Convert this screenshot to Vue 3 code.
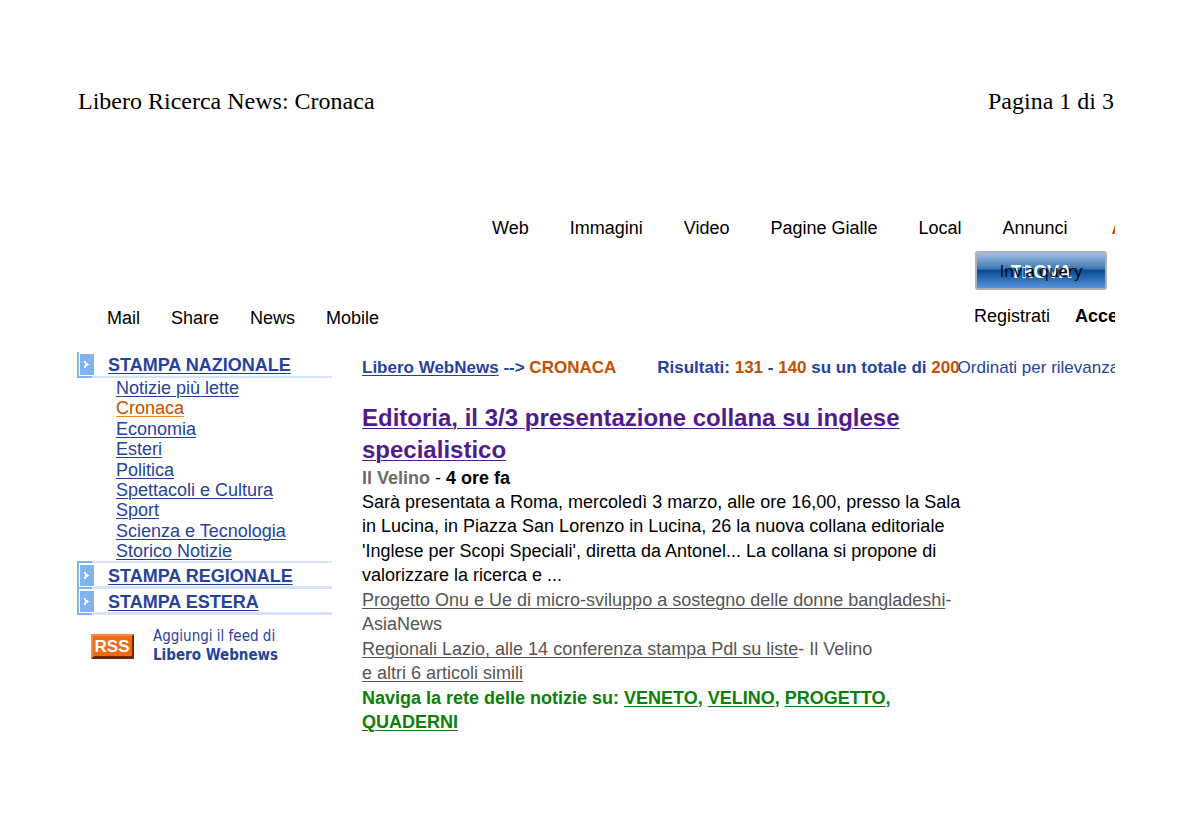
<script setup>
const searchTabs = ['Web', 'Immagini', 'Video', 'Pagine Gialle', 'Local', 'Annunci']
const services = ['Mail', 'Share', 'News', 'Mobile']
const sections = [
  {
    title: 'STAMPA NAZIONALE',
    open: true,
    items: ['Notizie più lette', 'Cronaca', 'Economia', 'Esteri', 'Politica', 'Spettacoli e Cultura', 'Sport', 'Scienza e Tecnologia', 'Storico Notizie'],
  },
  { title: 'STAMPA REGIONALE', items: [] },
  { title: 'STAMPA ESTERA', items: [] },
]
const topics = ['VENETO', 'VELINO', 'PROGETTO', 'QUADERNI']
</script>

<template>
  <div class="sheet">
    <header class="print-head">
      <span>Libero Ricerca News: Cronaca</span>
      <span>Pagina 1 di 3</span>
    </header>

    <nav class="tabs">
      <a v-for="t in searchTabs" :key="t" href="#">{{ t }}</a>
      <a href="#" class="more">A</a>
    </nav>

    <div class="search">
      <button type="button" class="find">
        <span class="find-word">TROVA</span>
        <span class="find-label">Invia query</span>
      </button>
    </div>

    <div class="services">
      <nav class="service-links">
        <a v-for="s in services" :key="s" href="#">{{ s }}</a>
      </nav>
      <div class="account">
        <a href="#">Registrati</a>
        <a href="#" class="login">Acce</a>
      </div>
    </div>

    <div class="columns">
      <aside class="side">
        <section v-for="s in sections" :key="s.title">
          <h2 class="side-title" :class="{ closed: !s.open }">
            <svg class="marker" width="18" height="26" viewBox="0 0 18 26" aria-hidden="true">
              <rect x="2" y="1" width="16" height="23" fill="#fff" />
              <path d="M0 0H2V24H15V26H0Z" fill="#84b2ee" />
              <rect x="3" y="2" width="14" height="21" fill="#84b2ee" />
              <path d="M7 9H9V11H11V12H12V13H11V14H9V16H7V14H8V11H7Z" fill="#fff" />
            </svg>
            <a href="#">{{ s.title }}</a>
          </h2>
          <ul v-if="s.items.length" class="side-list">
            <li v-for="i in s.items" :key="i">
              <a href="#" :class="{ current: i === 'Cronaca' }">{{ i }}</a>
            </li>
          </ul>
          <div v-if="s.items.length" class="side-rule"></div>
        </section>
        <a href="#" class="feed">
          <svg width="43" height="25" viewBox="0 0 43 25" role="img" aria-label="RSS">
            <rect width="43" height="25" fill="#6b2b08" />
            <path d="M0 0H43L40 3H3V22L0 25Z" fill="#f78a3c" />
            <rect x="2" y="2" width="39" height="20" fill="#f26a16" />
            <text x="21" y="18" text-anchor="middle" class="rss-text">RSS</text>
          </svg>
          <span class="feed-text">Aggiungi il feed di<b>Libero Webnews</b></span>
        </a>
      </aside>

      <main class="main">
        <div class="summary">
          <div><a href="#">Libero WebNews</a> --&gt; <em>CRONACA</em></div>
          <div class="count">Risultati: <em>131</em> - <em>140</em> su un totale di <em>200</em><span class="order">Ordinati per rilevanza</span></div>
        </div>
        <article class="story">
          <h1><a href="#">Editoria, il 3/3 presentazione collana su inglese specialistico</a></h1>
          <p class="source"><b class="paper">Il Velino</b> - <b>4 ore fa</b></p>
          <p>Sarà presentata a Roma, mercoledì 3 marzo, alle ore 16,00, presso la Sala in Lucina, in Piazza San Lorenzo in Lucina, 26 la nuova collana editoriale 'Inglese per Scopi Speciali', diretta da Antonel... La collana si propone di valorizzare la ricerca e ...</p>
          <p class="related"><a href="#">Progetto Onu e Ue di micro-sviluppo a sostegno delle donne bangladeshi</a>- AsiaNews</p>
          <p class="related"><a href="#">Regionali Lazio, alle 14 conferenza stampa Pdl su liste</a>- Il Velino</p>
          <p class="related"><a href="#">e altri 6 articoli simili</a></p>
          <p class="topics">Naviga la rete delle notizie su: <template v-for="(t, i) in topics" :key="t"><a href="#">{{ t }}</a><template v-if="i < topics.length - 1">, </template></template></p>
        </article>
      </main>
    </div>
  </div>
</template>

<style>
body {
  margin: 0;
  background: #fff;
}
</style>

<style scoped>
.sheet {
  margin: 0 78px 0 77px;
  padding-top: 86px;
  overflow: hidden;
  font: 18px/24px "Liberation Sans", Arial, sans-serif;
  color: #000;
  white-space: nowrap;
}
a {
  color: inherit;
  text-underline-offset: 2px;
  text-decoration-thickness: 1px;
}
p, h1, h2, ul {
  margin: 0;
  padding: 0;
}
em {
  font-style: normal;
  color: #c35000;
}
.print-head {
  display: flex;
  justify-content: space-between;
  padding: 0 1px;
  font: 24px/30px "Liberation Serif", "Times New Roman", serif;
}
.tabs {
  display: flex;
  gap: 41px;
  margin: 100px 0 0 415px;
}
.tabs a,
.services a {
  text-decoration: none;
}
.tabs .more {
  margin-left: 3px;
  color: #c35000;
  font-weight: bold;
}
.search {
  display: flex;
  justify-content: flex-end;
  margin-top: 11px;
  padding-right: 8px;
}
.find {
  display: grid;
  place-items: center;
  width: 132px;
  height: 39px;
  padding: 0;
  border: 2px solid #adb0b5;
  border-radius: 3px;
  background: linear-gradient(#a3c0e0, #3d78b5 45%, #0b4a8f 50%, #1e62ad 65%, #5593d6);
  font: 16px/20px "Open Sans", sans-serif;
  color: #000;
}
.find span {
  grid-area: 1 / 1;
}
.find-word {
  color: #f2f7fd;
  font-size: 18px;
  font-weight: bold;
}
.services {
  display: flex;
  justify-content: space-between;
  align-items: flex-start;
  margin-top: 14px;
  padding-left: 30px;
}
.service-links {
  display: flex;
  gap: 31px;
  padding-top: 2px;
}
.account {
  display: flex;
  gap: 25px;
  width: 141px;
}
.login {
  font-weight: bold;
}
.columns {
  display: flex;
  gap: 30px;
  margin-top: 22px;
}
.side {
  flex: 0 0 255px;
  color: #26439c;
}
.side-title {
  display: flex;
  gap: 13px;
  font-size: 18px;
  line-height: 26px;
  background: linear-gradient(#d3e3fa, #d3e3fa) 0 100% / 100% 2px no-repeat;
}
.side-title.closed {
  background-size: 100% 3px;
}
.side-list {
  list-style: none;
  padding-left: 39px;
  line-height: 20px;
  display: flex;
  flex-direction: column;
  justify-content: space-between;
  height: 183px;
}
.side-rule {
  height: 2px;
  background: linear-gradient(90deg, #84b2ee 15px, #d3e3fa 15px);
}
.side-list .current {
  color: #c35000;
  text-decoration-color: #f08a24;
}
.feed {
  display: flex;
  align-items: center;
  gap: 19px;
  margin-top: 12px;
  padding-left: 14px;
  text-decoration: none;
}
.rss-text {
  font: bold 17px "Liberation Sans", Arial, sans-serif;
  fill: #fff;
}
.feed-text {
  font: 15px/19px "DejaVu Sans Condensed", "DejaVu Sans", sans-serif;
}
.feed-text b {
  display: block;
}
.main {
  flex: 1;
  min-width: 0;
}
.summary {
  display: flex;
  gap: 41px;
  margin-top: 4px;
  font-size: 17px;
  font-weight: bold;
  color: #26439c;
}
.order {
  margin-left: -2px;
  font-weight: normal;
}
.story {
  max-width: 610px;
  margin-top: 22px;
  line-height: 1.36;
  white-space: normal;
}
.story h1 {
  font-size: 24px;
  line-height: 32px;
  color: #511b8b;
}
.paper {
  color: #6b6b6b;
}
.source {
  line-height: 24px;
}
.related {
  color: #555;
}
.topics {
  color: #0a800a;
  font-weight: bold;
}
</style>
